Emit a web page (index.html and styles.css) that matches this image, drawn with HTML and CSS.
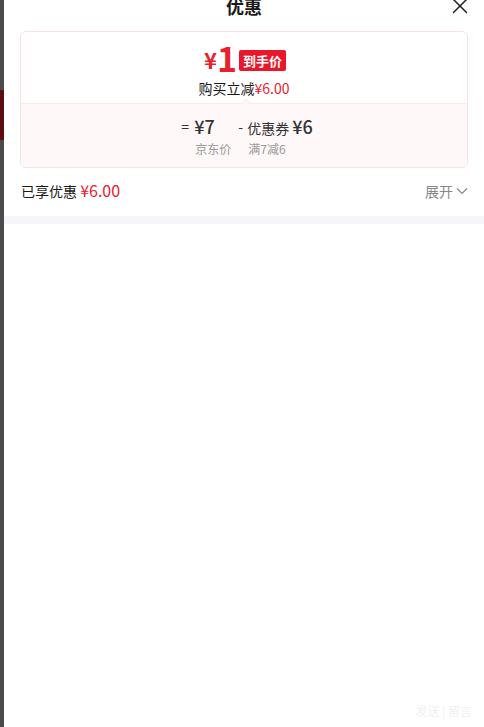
FILE: index.html
```html
<!DOCTYPE html>
<html lang="zh">
<head>
<meta charset="utf-8">
<link rel="stylesheet" href="styles.css">
</head>
<body>
<div class="screen">
  <div class="backdrop">
    <div class="bd-gap"></div>
    <div class="bd-red"></div>
  </div>
  <div class="panel">
    <div class="header">
      <span></span>
      <div class="title">优惠</div>
      <button class="close" aria-label="关闭">
        <svg width="16" height="16" viewBox="0 0 16 16"><path d="M1.5 1.5 L14.5 14.5 M14.5 1.5 L1.5 14.5" stroke="#222" stroke-width="1.5" fill="none" stroke-linecap="round"/></svg>
      </button>
    </div>

    <div class="card">
      <div class="card-top">
        <div class="price-line">
          <span class="yen">¥</span><span class="num">1</span>
          <span class="badge">到手价</span>
        </div>
        <div class="sub">购买立减<span class="red">¥6.00</span></div>
      </div>
      <div class="card-bottom">
        <span class="notch"></span>
        <div class="calc">
          <div class="col">
            <span class="op">=</span>
            <div class="cell">
              <div class="val"><span class="amt">¥7</span></div>
              <div class="lbl">京东价</div>
            </div>
          </div>
          <div class="col">
            <span class="op">-</span>
            <div class="cell">
              <div class="val"><span class="name">优惠券</span><span class="amt">¥6</span></div>
              <div class="lbl">满7减6</div>
            </div>
          </div>
        </div>
      </div>
    </div>

    <div class="summary">
      <div class="enjoyed">已享优惠 <span class="red big">¥6.00</span></div>
      <div class="expand">展开
        <svg width="12" height="8" viewBox="0 0 12 8"><path d="M1 1.5 L6 6.5 L11 1.5" stroke="#888" stroke-width="1.2" fill="none"/></svg>
      </div>
    </div>
    <div class="band"></div>
    <div class="rest"></div>
    <div class="watermark">发送 | 留言</div>
  </div>
</div>
</body>
</html>
```

FILE: styles.css
```css
* { box-sizing: border-box; }
html, body { margin: 0; padding: 0; }
body {
  width: 484px;
  height: 727px;
  overflow: hidden;
  background: #fff;
  font-family: "Noto Sans CJK SC", "Noto Sans", sans-serif;
  color: #1a1a1a;
}
.screen {
  display: flex;
  width: 484px;
  height: 727px;
}
.backdrop {
  width: 4px;
  flex: none;
  background: #4b4b4b;
  display: flex;
  flex-direction: column;
}
.bd-gap { height: 90px; }
.bd-red { height: 50px; background: #5e0b12; }

.panel {
  flex: 1;
  position: relative;
  background: #fff;
  display: flex;
  flex-direction: column;
}
.header {
  height: 31px;
  display: grid;
  grid-template-columns: 1fr auto 1fr;
  align-items: start;
}
.title {
  font-size: 18px;
  font-weight: 700;
  line-height: 12px;
  color: #1a1a1a;
}
.close {
  justify-self: end;
  margin: -2px 16px 0 0;
  padding: 0;
  border: 0;
  background: none;
  width: 16px;
  height: 16px;
  display: flex;
}

.card {
  margin: 0 16px;
  border: 1px solid #f7e1e4;
  border-radius: 6px;
  overflow: hidden;
}
.card-top {
  height: 71px;
  padding-top: 11px;
  display: flex;
  flex-direction: column;
  align-items: center;
}
.price-line {
  height: 30px;
  display: flex;
  align-items: center;
  color: #e8212e;
  font-weight: 700;
  padding-left: 2px;
}
.yen { font-size: 22px; line-height: 30px; margin-top: 2px; }
.num { font-size: 34px; line-height: 30px; margin-right: 2px; }
.badge {
  background: #e8172a;
  color: #fff;
  font-size: 13px;
  font-weight: 700;
  line-height: 21px;
  height: 21px;
  padding: 0 4px;
  border-radius: 2px;
  margin-top: 4px;
}
.sub {
  margin-top: 5px;
  font-size: 14px;
  line-height: 20px;
  color: #1a1a1a;
}
.red { color: #e8212e; }
.card-bottom {
  position: relative;
  height: 64px;
  background: #fff8f8;
  border-top: 1px solid #fbe8ea;
  padding-top: 11px;
}
.notch {
  position: absolute;
  left: 222px;
  top: -4px;
  width: 6px;
  height: 6px;
  background: #fff8f8;
  border-top: 1px solid #fbe8ea;
  border-left: 1px solid #fbe8ea;
  transform: rotate(45deg);
}
.calc {
  display: flex;
  justify-content: center;
  gap: 7px;
  padding-left: 6px;
}
.col {
  display: flex;
  align-items: flex-start;
}
.op {
  font-size: 14px;
  line-height: 22px;
  color: #333;
  width: 13px;
}
.col:last-child .op { width: 9px; }
.cell { display: flex; flex-direction: column; }
.val {
  line-height: 22px;
  height: 22px;
  color: #333;
  white-space: nowrap;
}
.amt { font-size: 18px; font-weight: 500; }
.name { font-size: 14px; margin-right: 3px; }
.lbl {
  margin-top: 4px;
  font-size: 12px;
  line-height: 16px;
  color: #999;
  padding-left: 1px;
}

.summary {
  height: 48px;
  padding: 0 16px 3px 17px;
  display: flex;
  align-items: center;
  justify-content: space-between;
}
.enjoyed { font-size: 14px; color: #1a1a1a; line-height: 24px; }
.big { font-size: 16px; }
.expand {
  font-size: 14px;
  color: #888;
  display: flex;
  align-items: center;
  gap: 3px;
}
.band {
  height: 8px;
  background: #f5f6fa;
}
.rest { flex: 1; background: #fff; }
.watermark {
  position: absolute;
  right: 12px;
  bottom: 8px;
  font-size: 12px;
  color: #f0f0f0;
}
```
